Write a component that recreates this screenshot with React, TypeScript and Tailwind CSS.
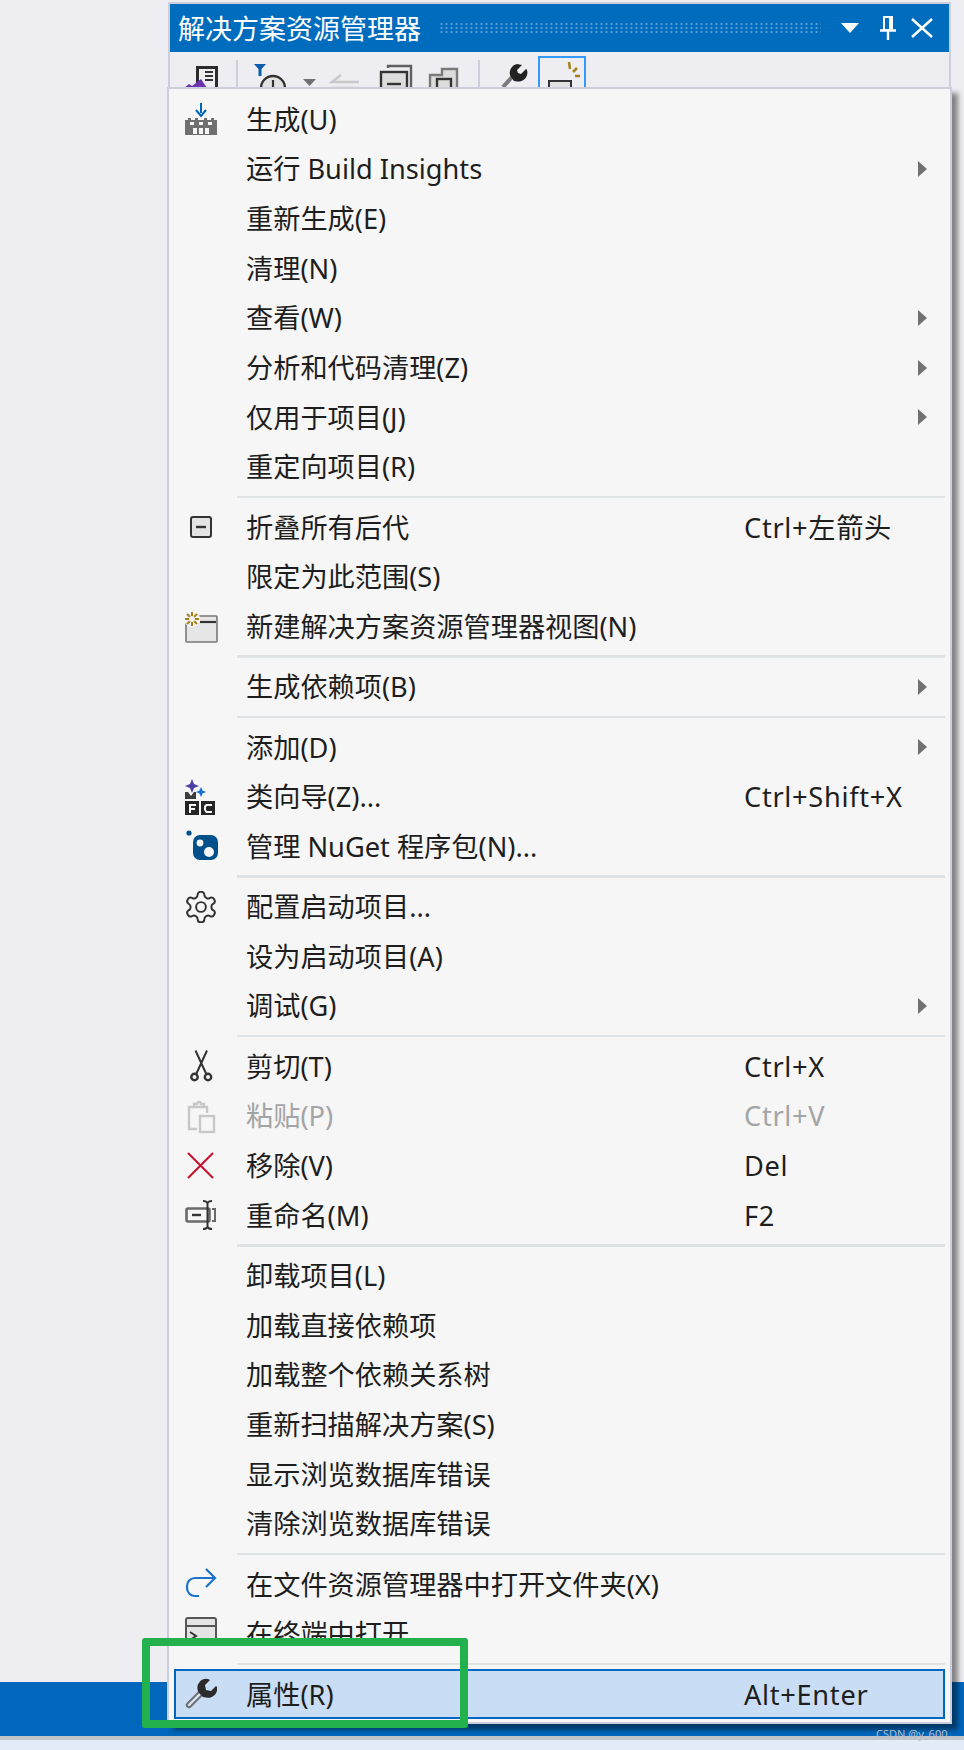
import React from "react";

const FONT = "[font-family:'Noto_Sans','Noto_Sans_CJK_SC',sans-serif]";

function Build() {
  return (
    <svg width="32" height="32" viewBox="0 0 32 32">
      <path d="M0 17h3v-2h3v2h4v-2h3v2h6v-2h3v2h4v-2h3v2h3v15H0z" fill="#6f6f6f" />
      <path d="M15 0h2v10h-2z" fill="#0066b8" />
      <path d="M11 7l5 6 5-6" fill="none" stroke="#0066b8" strokeWidth="2" />
      <path d="M5 19h4v3H5zM14 19h4v3h-4zM23 19h4v3h-4z" fill="#f6f6f6" />
      <path d="M8 25h4v6H8zM14 25h4v6h-4zM20 25h4v6h-4z" fill="#f6f6f6" />
    </svg>
  );
}
function Collapse() {
  return (
    <svg width="32" height="32" viewBox="0 0 32 32">
      <rect x="6" y="6" width="20" height="20" rx="2" fill="#e4e4e4" stroke="#333" strokeWidth="2" />
      <path d="M11 16h10" stroke="#333" strokeWidth="2.400" />
    </svg>
  );
}
function NewView() {
  return (
    <svg width="34" height="32" viewBox="0 0 34 32">
      <rect x="2" y="5" width="31" height="26" rx="1" fill="#e6e6e6" stroke="#777" strokeWidth="1.600" />
      <path d="M16 11h16" stroke="#333" strokeWidth="2.200" />
      <circle cx="8" cy="8" r="8" fill="#f6f6f6" />
      <path d="M8 1v14M1 8h14M3 3l10 10M13 3L3 13" stroke="#a8801a" strokeWidth="2" />
      <circle cx="8" cy="8" r="3" fill="#f6f6f6" />
    </svg>
  );
}
function Mfc() {
  return (
    <svg width="32" height="36" viewBox="0 0 32 36">
      <path d="M7 0l2 5 5 2-5 2-2 5-2-5-5-2 5-2z" fill="#4b3fa6" />
      <path d="M16 8l1.600 3.400L21 13l-3.400 1.600L16 18l-1.600-3.400L11 13l3.400-1.600z" fill="#1b73d1" />
      <path d="M0 13h3l3 4 3-4h2v7H0z" fill="#3c3c3c" />
      <rect x="0" y="22" width="14" height="14" fill="#252525" />
      <rect x="16" y="22" width="14" height="14" fill="#252525" />
      <path d="M4 25h7v2H6v2h4v2H6v3H4z" fill="#f6f6f6" />
      <path d="M27 25h-6l-2 2v4l2 3h6v-2h-5l-1-1v-3l1-1h5z" fill="#f6f6f6" />
    </svg>
  );
}
function NuGet() {
  return (
    <svg width="34" height="32" viewBox="0 0 34 32">
      <circle cx="5" cy="3" r="2.600" fill="#00508c" />
      <rect x="9" y="5" width="25" height="25" rx="7" fill="#00508c" />
      <circle cx="16" cy="13" r="3.400" fill="#f6f6f6" />
      <circle cx="25" cy="22" r="5" fill="#f6f6f6" />
    </svg>
  );
}
function Gear() {
  return (
    <svg width="32" height="32" viewBox="1.500 1.500 21 21" fill="none" stroke="#333" strokeWidth="1.300" strokeLinecap="round" strokeLinejoin="round">
      <path d="M12.220 2h-.44a2 2 0 0 0-2 2v.18a2 2 0 0 1-1 1.730l-.43.25a2 2 0 0 1-2 0l-.15-.08a2 2 0 0 0-2.730.73l-.22.38a2 2 0 0 0 .73 2.730l.15.1a2 2 0 0 1 1 1.720v.51a2 2 0 0 1-1 1.740l-.15.09a2 2 0 0 0-.73 2.730l.22.38a2 2 0 0 0 2.730.73l.15-.08a2 2 0 0 1 2 0l.43.25a2 2 0 0 1 1 1.730V20a2 2 0 0 0 2 2h.44a2 2 0 0 0 2-2v-.18a2 2 0 0 1 1-1.730l.43-.25a2 2 0 0 1 2 0l.15.08a2 2 0 0 0 2.730-.73l.22-.39a2 2 0 0 0-.73-2.730l-.15-.08a2 2 0 0 1-1-1.740v-.5a2 2 0 0 1 1-1.740l.15-.09a2 2 0 0 0 .73-2.730l-.22-.38a2 2 0 0 0-2.730-.73l-.15.08a2 2 0 0 1-2 0l-.43-.25a2 2 0 0 1-1-1.730V4a2 2 0 0 0-2-2z" />
      <circle cx="12" cy="12" r="3.200" />
    </svg>
  );
}
function Scissors() {
  return (
    <svg width="32" height="32" viewBox="0 0 32 32" fill="none" stroke="#333" strokeWidth="2">
      <circle cx="9.500" cy="27" r="3.200" strokeWidth="2.400" />
      <circle cx="23" cy="27" r="3.200" strokeWidth="2.400" />
      <path d="M11 24.500L22 0.500M21.500 24.500L10.500 0.500" />
    </svg>
  );
}
function Paste() {
  return (
    <svg width="32" height="36" viewBox="0 0 32 36" fill="none" stroke="#c8c8c8" strokeWidth="2.400">
      <path d="M12 31H4V9h18v6" />
      <path d="M9 9V6h3a2 2 0 0 1 4 0h3v3" />
      <rect x="15" y="18" width="14" height="16" fill="#f6f6f6" />
    </svg>
  );
}
function Remove() {
  return (
    <svg width="32" height="32" viewBox="0 0 32 32" stroke="#c8102e" strokeWidth="2">
      <path d="M3 3l25 25M28 3L3 28" />
    </svg>
  );
}
function Rename() {
  return (
    <svg width="32" height="32" viewBox="0 0 32 32" fill="none">
      <rect x="1.500" y="9.500" width="23" height="13" rx="1.500" stroke="#6a6a6a" strokeWidth="2.600" />
      <path d="M7 16h9" stroke="#333" strokeWidth="2.400" />
      <path d="M18 2c3 0 4 1 4.500 2 .5-1 1.500-2 4.500-2M18 30c3 0 4-1 4.500-2 .5 1 1.500 2 4.500 2M22.500 4v24" stroke="#333" strokeWidth="2" />
      <path d="M27 10h3v12h-3" stroke="#6a6a6a" strokeWidth="2" />
    </svg>
  );
}
function OpenFolder() {
  return (
    <svg width="32" height="32" viewBox="0 0 32 32" fill="none" stroke="#1a73c8" strokeWidth="2.200">
      <path d="M30 10H10a8 8 0 0 0-8 8v2a8 8 0 0 0 8 8h4" />
      <path d="M21 1l9 9-9 9" />
    </svg>
  );
}
function Terminal() {
  return (
    <svg width="32" height="34" viewBox="0 0 32 34" fill="none">
      <rect x="1" y="1" width="30" height="32" rx="2" fill="#e4e4e4" stroke="#555" strokeWidth="2" />
      <path d="M1 9h30" stroke="#555" strokeWidth="2" />
      <path d="M5 15l6 4-6 4M13 25h7" stroke="#333" strokeWidth="2" />
    </svg>
  );
}
function Wrench() {
  return (
    <svg width="32" height="32" viewBox="0 0 32 32">
      <path d="M4 27L15 16" stroke="#6f6f6f" strokeWidth="6.400" strokeLinecap="round" fill="none" />
      <path d="M4 27L15 16" stroke="#d8e4f4" strokeWidth="2.400" strokeLinecap="round" fill="none" />
      <path d="M23 1a9 9 0 0 0-10 12l1 2 4 4 3 .5A9 9 0 0 0 32 9l-1-1-5 5-5-1-1-5 5-5z" fill="#2b2b2b" />
    </svg>
  );
}

type Item = {
  t?: string;
  k?: string;
  a?: boolean;
  i?: React.ReactNode;
  sep?: boolean;
  dis?: boolean;
  hl?: boolean;
};

const items: Item[] = [
  { t: "生成(U)", i: <Build /> },
  { t: "运行 Build Insights", a: true },
  { t: "重新生成(E)" },
  { t: "清理(N)" },
  { t: "查看(W)", a: true },
  { t: "分析和代码清理(Z)", a: true },
  { t: "仅用于项目(J)", a: true },
  { t: "重定向项目(R)" },
  { sep: true },
  { t: "折叠所有后代", k: "Ctrl+左箭头", i: <Collapse /> },
  { t: "限定为此范围(S)" },
  { t: "新建解决方案资源管理器视图(N)", i: <NewView /> },
  { sep: true },
  { t: "生成依赖项(B)", a: true },
  { sep: true },
  { t: "添加(D)", a: true },
  { t: "类向导(Z)...", k: "Ctrl+Shift+X", i: <Mfc /> },
  { t: "管理 NuGet 程序包(N)...", i: <NuGet /> },
  { sep: true },
  { t: "配置启动项目...", i: <Gear /> },
  { t: "设为启动项目(A)" },
  { t: "调试(G)", a: true },
  { sep: true },
  { t: "剪切(T)", k: "Ctrl+X", i: <Scissors /> },
  { t: "粘贴(P)", k: "Ctrl+V", i: <Paste />, dis: true },
  { t: "移除(V)", k: "Del", i: <Remove /> },
  { t: "重命名(M)", k: "F2", i: <Rename /> },
  { sep: true },
  { t: "卸载项目(L)" },
  { t: "加载直接依赖项" },
  { t: "加载整个依赖关系树" },
  { t: "重新扫描解决方案(S)" },
  { t: "显示浏览数据库错误" },
  { t: "清除浏览数据库错误" },
  { sep: true },
  { t: "在文件资源管理器中打开文件夹(X)", i: <OpenFolder /> },
  { t: "在终端中打开", i: <Terminal /> },
  { sep: true },
  { t: "属性(R)", k: "Alt+Enter", i: <Wrench />, hl: true },
];

function Row({ it }: { it: Item }) {
  if (it.sep) {
    return (
      <div className="h-[10.700px] flex items-center pl-[63px]">
        <div className="h-[2.500px] w-full bg-[#e0e3e6]" />
      </div>
    );
  }
  return (
    <div
      className={`h-[49.650px] flex items-center ${it.hl ? "bg-[#c9ddf4] ring-2 ring-inset ring-[#0067c0]" : ""} ${
        it.dis ? "text-[#a2a4a5]" : "text-[#1e1e1e]"
      }`}
    >
      <div className="w-[34px] h-[36px] ml-[10px] flex items-center justify-center shrink-0">{it.i}</div>
      <div className="w-[498px] ml-[28px] shrink-0 whitespace-nowrap">{it.t}</div>
      <div className="whitespace-nowrap tracking-[0.7px]">{it.k}</div>
      {it.a && <div className="ml-auto mr-[18px] w-0 h-0 border-y-[8px] border-y-transparent border-l-[9px] border-l-[#717171]" />}
    </div>
  );
}

function Toolbar() {
  return (
    <div className="h-[36px] bg-[#eeeef2] flex items-start overflow-hidden">
      <svg width="38" height="36" viewBox="0 0 38 36" className="ml-[13px] shrink-0">
        <path d="M13 14h22v22H13z" fill="#2b2b2b" />
        <path d="M16 17h16v19H16z" fill="#eeeef2" />
        <path d="M22 20h8M22 24h8M22 28h8" stroke="#333" strokeWidth="2" />
        <path d="M1 36l5-4 3 2 9-7 6 9z" fill="#6a35b0" />
      </svg>
      <div className="ml-[15px] mt-[8px] w-[2px] h-[28px] bg-[#cccedb]" />
      <svg width="72" height="36" viewBox="0 0 72 36" className="ml-[10px] shrink-0">
        <path d="M6 12h12l-4.500 5v7h-3v-7z" fill="#0b5cad" />
        <circle cx="25" cy="36" r="12" fill="#e2e2e2" stroke="#333" strokeWidth="2.400" />
        <path d="M25 28v8h6" stroke="#333" strokeWidth="2.200" fill="none" />
        <path d="M55 27h13l-6.500 7z" fill="#717171" />
      </svg>
      <svg width="32" height="36" viewBox="0 0 32 36" className="ml-[9px] shrink-0">
        <path d="M2 36h28M12 23l-9 7h27" stroke="#c8c8c8" strokeWidth="2.400" fill="none" />
      </svg>
      <svg width="36" height="36" viewBox="0 0 36 36" className="ml-[17px] shrink-0">
        <path d="M10 16v-2h23v22" fill="none" stroke="#5f5f5f" strokeWidth="2.400" />
        <rect x="3" y="20" width="26" height="20" fill="#dcdcdc" stroke="#333" strokeWidth="2.400" />
        <path d="M9 32h14" stroke="#333" strokeWidth="2.400" />
      </svg>
      <svg width="34" height="36" viewBox="0 0 34 36" className="ml-[14px] shrink-0">
        <path d="M2 36V23h12v-6h15v19" fill="#dcdcdc" stroke="#7a7a7a" strokeWidth="2.400" />
        <rect x="9" y="27" width="14" height="14" fill="#dcdcdc" stroke="#333" strokeWidth="2.400" />
      </svg>
      <div className="ml-[16px] mt-[8px] w-[2px] h-[28px] bg-[#cccedb]" />
      <svg width="32" height="36" viewBox="0 0 32 36" className="ml-[21px] shrink-0">
        <path d="M2 35L11 25" stroke="#7a7a7a" strokeWidth="4" fill="none" />
        <path d="M16 12a9 9 0 0 0-7 11l1 2 3 4 3 .5A9 9 0 0 0 26 18l-1-1-5 5-3-1-1-3 5-5z" fill="#222" />
      </svg>
      <div className="ml-[5px] mt-[4px] w-[48px] h-[34px] border-2 border-[#3399ff] shrink-0 overflow-hidden">
        <svg width="44" height="32" viewBox="0 0 44 32">
          <rect x="9" y="23" width="22" height="14" fill="#e2e2e2" stroke="#333" strokeWidth="2" />
          <path d="M29 4l1 7M37 10l-4 4M35 18h5" stroke="#a8801a" strokeWidth="2.500" />
        </svg>
      </div>
    </div>
  );
}

export default function App() {
  return (
    <div className={`relative w-[964px] h-[1750px] overflow-hidden flex flex-col ${FONT}`}>
      <div className="h-[1682px] bg-[#eeeef2] pl-[168px] pt-[2px]">
        <div className="w-[783px] border-x-2 border-t-2 border-[#cccedb]">
          <div className="h-[48px] bg-[#006cbe] flex items-center pl-[8px] text-white text-[27px] leading-none">
            <span className="whitespace-nowrap">解决方案资源管理器</span>
            <div className="ml-[18px] w-[382px] h-[12px] bg-[radial-gradient(circle,#5f9fd8_1px,transparent_1.200px)] bg-[length:5px_4px]" />
            <svg width="20" height="12" viewBox="0 0 20 12" className="ml-[19px]">
              <path d="M1 1h18l-9 10z" fill="#fff" />
            </svg>
            <svg width="18" height="24" viewBox="0 0 18 24" className="ml-[19px]">
              <path d="M5 1h8v13H5z" fill="none" stroke="#fff" strokeWidth="2" />
              <path d="M11 1v13" stroke="#fff" strokeWidth="2" />
              <path d="M1 14.500h16M9 15v9" stroke="#fff" strokeWidth="2.400" />
            </svg>
            <svg width="22" height="20" viewBox="0 0 22 20" className="ml-[14px]">
              <path d="M1 1l20 18M21 1L1 19" stroke="#fff" strokeWidth="2.400" />
            </svg>
          </div>
          <Toolbar />
        </div>
      </div>
      <div className="h-[54px] bg-[#0067bc]" />
      <div className="h-[4px] bg-[#c0c4c8]" />
      <div className="flex-1 bg-[#e1ecf8]" />

      <div className="absolute left-[167px] top-[87px] w-[785px] border-2 border-[#cccedb] bg-[#f6f6f6] pt-[5.600px] pb-[3px] px-[5px] text-[27.200px] leading-none shadow-[6px_6px_5px_rgba(0,0,0,0.45)]">
        {items.map((it, i) => (
          <Row key={i} it={it} />
        ))}
      </div>

      <div className="absolute left-[170px] top-[1646px] w-[290px] h-[14px] bg-[#f6f6f6]" />
      <div className="absolute left-[142px] top-[1638px] w-[326px] h-[90px] border-[8px] border-[#22b14c] rounded-[3px]" />
      <div className="absolute left-[876px] top-[1727px] text-[11px] leading-[14px] text-[#b4c0cc] whitespace-nowrap">CSDN @y_600</div>
    </div>
  );
}
